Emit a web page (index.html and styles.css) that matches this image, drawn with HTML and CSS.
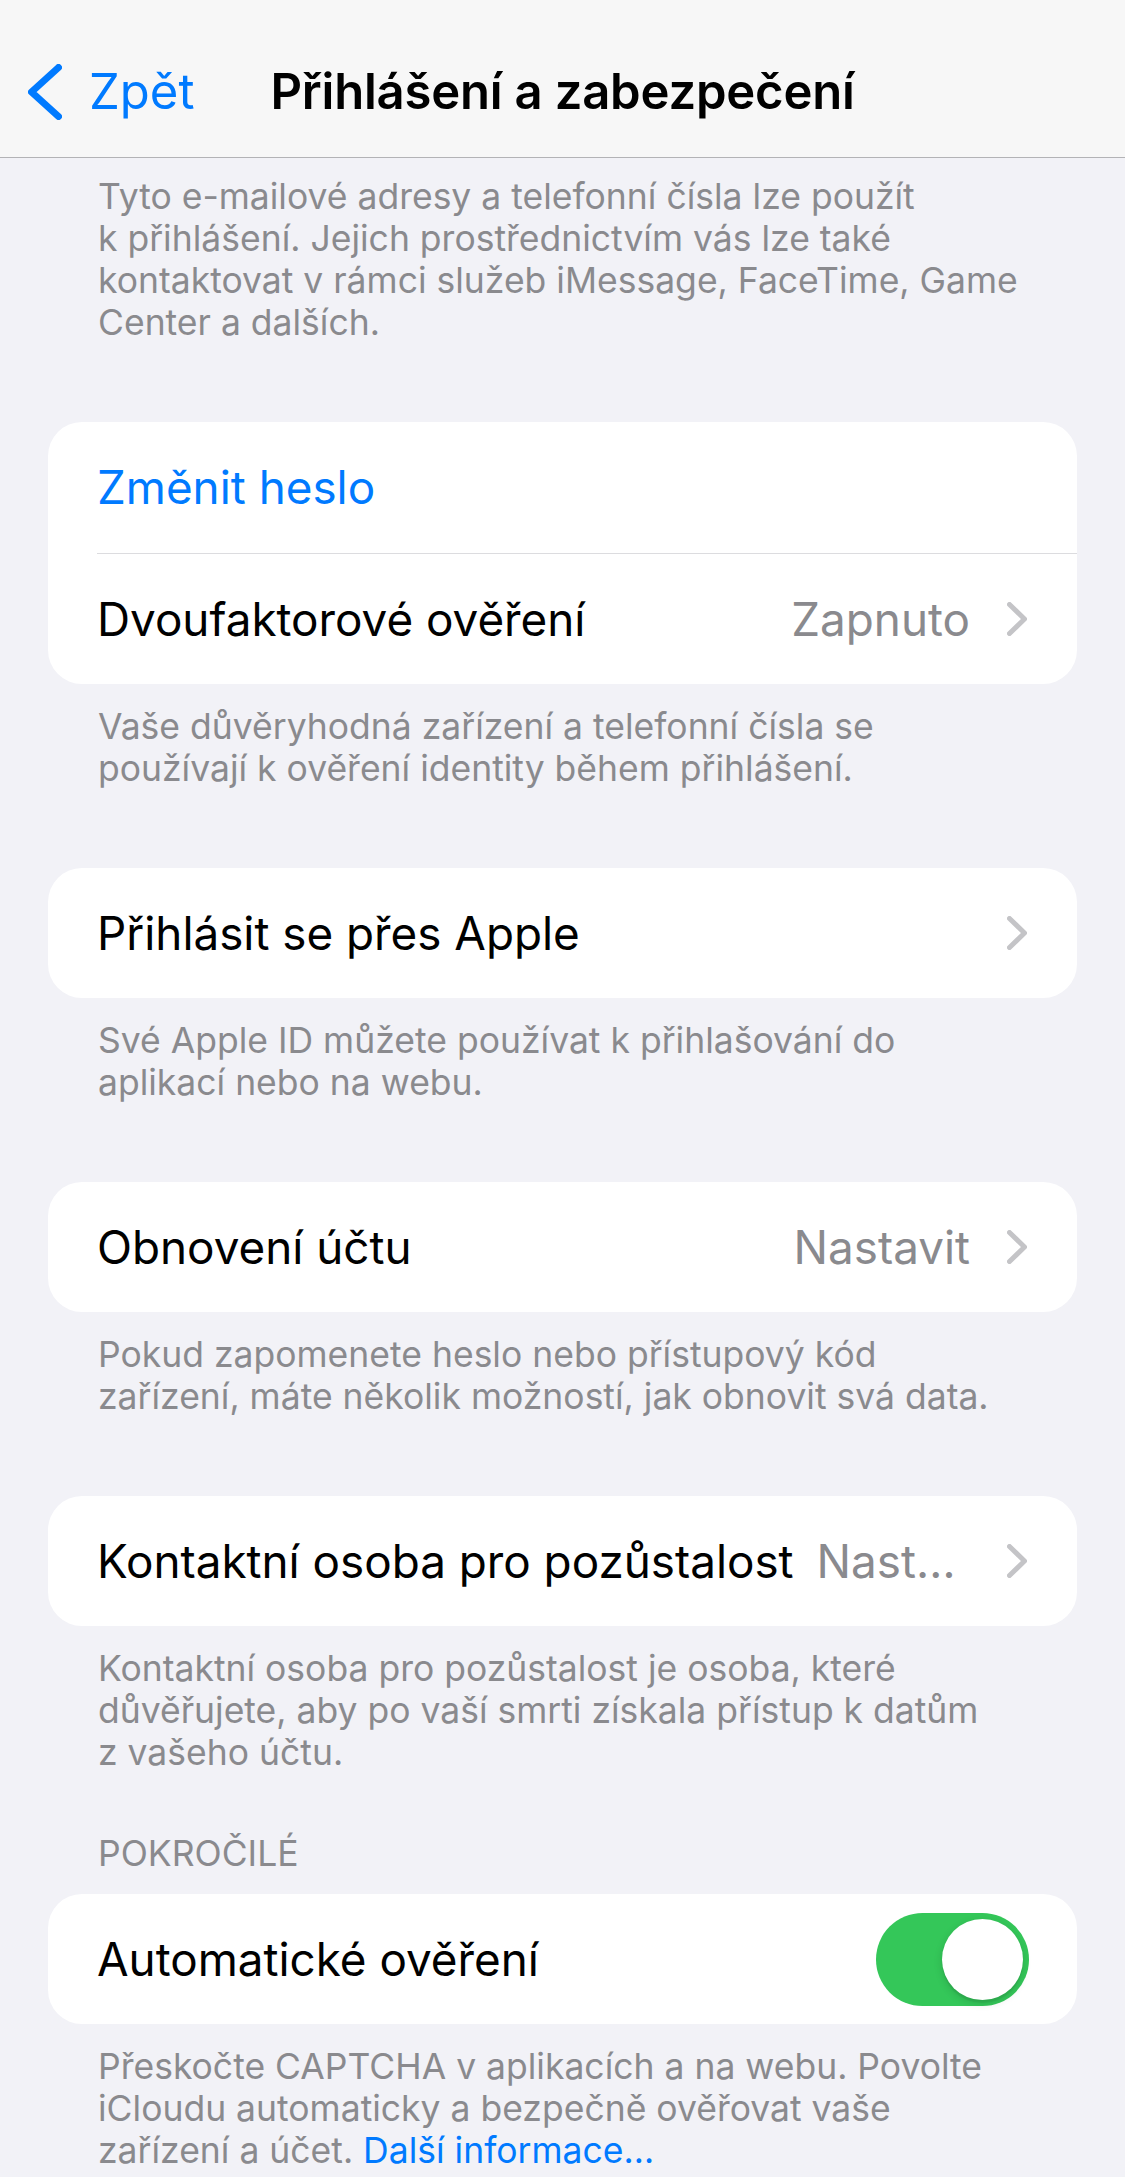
FILE: index.html
```html
<!DOCTYPE html>
<html lang="cs">
<head>
<meta charset="utf-8">
<title>Přihlášení a zabezpečení</title>
<link rel="stylesheet" href="styles.css">
</head>
<body>
<header class="nav">
  <a class="nav__back" href="#">
    <svg class="nav__chevron" width="34" height="56" viewBox="0 0 34 56" aria-hidden="true"><path d="M30.5 3.5 L3.5 28 L30.5 52.5" fill="none" stroke="#007AFF" stroke-width="7" stroke-linecap="round" stroke-linejoin="round"/></svg>
    <span class="nav__back-label">Zpět</span>
  </a>
  <h1 class="nav__title">Přihlášení a zabezpečení</h1>
  <span class="nav__spacer"></span>
</header>

<main class="content">
  <p class="note note--top">Tyto e-mailové adresy a telefonní čísla lze použít<br>k přihlášení. Jejich prostřednictvím vás lze také<br>kontaktovat v rámci služeb iMessage, FaceTime, Game<br>Center a dalších.</p>

  <section class="group">
    <div class="row"><div class="row__inner"><span class="row__label row__label--link">Změnit heslo</span></div></div>
    <div class="row"><div class="row__inner"><span class="row__label">Dvoufaktorové ověření</span><span class="row__value">Zapnuto</span><svg class="row__chevron" width="20" height="34" viewBox="0 0 20 34" aria-hidden="true"><path d="M2.5 2.5 L17.5 17 L2.5 31.5" fill="none" stroke="#C4C4C7" stroke-width="5" stroke-linecap="round" stroke-linejoin="round"/></svg></div></div>
  </section>
  <p class="note">Vaše důvěryhodná zařízení a telefonní čísla se<br>používají k ověření identity během přihlášení.</p>

  <section class="group">
    <div class="row"><div class="row__inner"><span class="row__label">Přihlásit se přes Apple</span><svg class="row__chevron" width="20" height="34" viewBox="0 0 20 34" aria-hidden="true"><path d="M2.5 2.5 L17.5 17 L2.5 31.5" fill="none" stroke="#C4C4C7" stroke-width="5" stroke-linecap="round" stroke-linejoin="round"/></svg></div></div>
  </section>
  <p class="note">Své Apple ID můžete používat k přihlašování do<br>aplikací nebo na webu.</p>

  <section class="group">
    <div class="row"><div class="row__inner"><span class="row__label">Obnovení účtu</span><span class="row__value">Nastavit</span><svg class="row__chevron" width="20" height="34" viewBox="0 0 20 34" aria-hidden="true"><path d="M2.5 2.5 L17.5 17 L2.5 31.5" fill="none" stroke="#C4C4C7" stroke-width="5" stroke-linecap="round" stroke-linejoin="round"/></svg></div></div>
  </section>
  <p class="note">Pokud zapomenete heslo nebo přístupový kód<br>zařízení, máte několik možností, jak obnovit svá data.</p>

  <section class="group">
    <div class="row"><div class="row__inner"><span class="row__label">Kontaktní osoba pro pozůstalost</span><span class="row__value row__value--short">Nast…</span><svg class="row__chevron row__chevron--push" width="20" height="34" viewBox="0 0 20 34" aria-hidden="true"><path d="M2.5 2.5 L17.5 17 L2.5 31.5" fill="none" stroke="#C4C4C7" stroke-width="5" stroke-linecap="round" stroke-linejoin="round"/></svg></div></div>
  </section>
  <p class="note">Kontaktní osoba pro pozůstalost je osoba, které<br>důvěřujete, aby po vaší smrti získala přístup k datům<br>z vašeho účtu.</p>

  <h2 class="section-header">Pokročilé</h2>
  <section class="group group--tight">
    <div class="row"><div class="row__inner"><span class="row__label">Automatické ověření</span><span class="switch switch--on" role="switch" aria-checked="true"><span class="switch__thumb"></span></span></div></div>
  </section>
  <p class="note">Přeskočte CAPTCHA v aplikacích a na webu. Povolte<br>iCloudu automaticky a bezpečně ověřovat vaše<br>zařízení a účet. <a class="note__link" href="#">Další informace…</a></p>
</main>
</body>
</html>
```

FILE: styles.css
```css
* { box-sizing: border-box; }

html, body {
  margin: 0;
  padding: 0;
}

body {
  background: #F2F2F7;
  font-family: Inter, "Noto Sans", "Liberation Sans", sans-serif;
  color: #000;
  width: 1125px;
  min-height: 2177px;
  overflow: hidden;
}

/* ---------- navigation bar ---------- */
.nav {
  display: grid;
  grid-template-columns: 1fr auto 1fr;
  align-items: center;
  height: 158px;
  padding: 62px 0 35px;
  background: #F7F7F7;
  border-bottom: 1px solid #B3B3B6;
}

.nav__back {
  display: flex;
  align-items: center;
  gap: 27px;
  padding-left: 28px;
  color: #007AFF;
  text-decoration: none;
  font-size: 49px;
  line-height: 60px;
}

.nav__chevron { display: block; flex: none; }

.nav__title {
  margin: 0;
  font-size: 49px;
  line-height: 60px;
  font-weight: 600;
  letter-spacing: -0.2px;
  white-space: nowrap;
}

/* ---------- content ---------- */
.content {
  padding: 18px 48px 0;
}

.note {
  margin: 22px 0 0;
  padding: 0 50px;
  font-size: 35.5px;
  line-height: 42px;
  color: #8A8A8E;
  white-space: nowrap;
}

.note--top { margin-top: 0; }

.note__link {
  color: #007AFF;
  text-decoration: none;
}

.group {
  margin-top: 78px;
  background: #FFFFFF;
  border-radius: 34px;
  overflow: hidden;
}

.group--tight { margin-top: 19px; }

.section-header {
  margin: 59px 0 0;
  padding: 0 50px;
  font-size: 35.5px;
  line-height: 42px;
  font-weight: 400;
  color: #8A8A8E;
  text-transform: uppercase;
}

.row {
  padding-left: 49px;
}

.row__inner {
  display: flex;
  align-items: center;
  height: 130px;
  padding-right: 50px;
}

.row + .row .row__inner {
  height: 131px;
  border-top: 1px solid #DCDCDF;
}

.row:first-child .row__inner { height: 131px; }
.row:first-child:last-child .row__inner { height: 130px; }

.row__label {
  flex: none;
  font-size: 45.8px;
  white-space: nowrap;
}

.row__label--link { color: #007AFF; }

.row__value {
  margin-left: auto;
  padding-left: 23px;
  font-size: 45.8px;
  color: #8A8A8E;
  white-space: nowrap;
}

.row__value--short { margin-left: 0; }

.row__chevron {
  display: block;
  flex: none;
  margin-left: 37px;
}

.row__label + .row__chevron,
.row__chevron--push { margin-left: auto; }

/* ---------- switch ---------- */
.switch {
  margin-left: auto;
  margin-right: -2px;
  flex: none;
  display: flex;
  align-items: center;
  justify-content: flex-end;
  width: 153px;
  height: 93px;
  padding: 6px;
  border-radius: 47px;
  background: #34C759;
}

.switch__thumb {
  width: 81px;
  height: 81px;
  border-radius: 50%;
  background: #FFFFFF;
  box-shadow: 0 3px 8px rgba(0, 0, 0, 0.15), 0 3px 1px rgba(0, 0, 0, 0.06);
}
```
